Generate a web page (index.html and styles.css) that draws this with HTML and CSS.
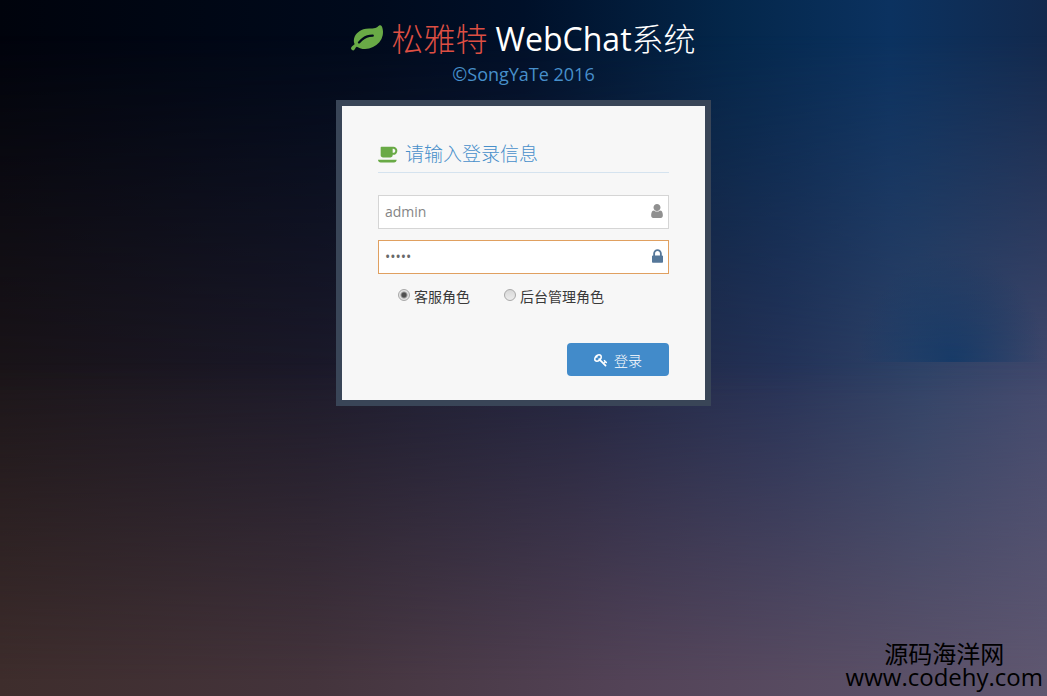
FILE: index.html
```html
<!DOCTYPE html>
<html lang="zh-CN">
    <head>
        <meta charset="utf-8">
        <meta name="viewport" content="width=device-width, initial-scale=1">
        <title>松雅特WebChat系统</title>
        <link rel="stylesheet" href="styles.css">
    </head>
    <body>
        <main class="login-container">
            <header class="brand">
                <h1>
                    <svg class="icon-leaf" viewBox="0 0 1792 1792" aria-hidden="true"><path d="M1280 704q0-26-19-45t-45-19q-172 0-318 49.5t-259.5 134-235.5 219.5q-19 21-19 45 0 26 19 45t45 19q24 0 45-19 27-24 74-71t67-66q137-124 268.5-176t313.5-52q26 0 45-19t19-45zm512-198q0 95-20 193-46 224-184.5 383t-357.5 268q-214 108-438 108-148 0-286-47-15-5-88-42t-96-37q-16 0-39.5 32t-45 70-52.5 70-60 32q-43 0-63.5-17.5t-45.5-59.5q-2-4-6-11t-5.5-10-3-9.5-1.5-13.5q0-35 31-73.5t68-65.5 68-56 31-48q0-4-14-38t-16-44q-9-51-9-104 0-115 43.5-220t119-184.5 170.5-139 204-95.5q55-18 145-25.5t179.5-9 178.5-6 163.5-24 113.5-56.5l29.5-29.5 29.5-28 27-20 36.5-16 43.5-4.5q39 0 70.5 46t47.5 112 24 124 8 96z"/></svg>
                    <span class="red">松雅特</span>
                    <span>WebChat<span class="light">系统</span></span>
                </h1>
                <h4>©SongYaTe 2016</h4>
            </header>

            <form class="login-box">
                <h2>
                    <svg class="icon-coffee" viewBox="0 0 1920 1792" aria-hidden="true"><path d="M1664 544q0-80-56-136t-136-56h-64v384h64q80 0 136-56t56-136zm-1664 864h1792q0 106-75 181t-181 75h-1280q-106 0-181-75t-75-181zm1856-864q0 159-112.5 271.5t-271.5 112.5h-64v32q0 92-66 158t-158 66h-704q-92 0-158-66t-66-158v-736q0-26 19-45t45-19h1152q159 0 271.5 112.5t112.5 271.5z"/></svg>
                    请输入登录信息
                </h2>

                <div class="field">
                    <input type="text" name="username" value="admin" aria-label="用户名">
                    <svg class="icon-user" viewBox="256 128 1280 1536" aria-hidden="true"><path d="M1536 1399q0 109-62.5 187t-150.5 78h-854q-88 0-150.5-78t-62.5-187q0-85 8.5-160.5t31.5-152 58.5-131 94-89 134.5-34.5q131 128 313 128t313-128q76 0 134.5 34.5t94 89 58.5 131 31.5 152 8.5 160.5zm-256-887q0 159-112.5 271.5t-271.5 112.5-271.5-112.5-112.5-271.5 112.5-271.5 271.5-112.5 271.5 112.5 112.5 271.5z"/></svg>
                </div>
                <div class="field active">
                    <input type="password" name="password" value="admin" aria-label="密码">
                    <svg class="icon-lock" viewBox="320 128 1152 1408" aria-hidden="true"><path d="M640 768h512v-192q0-106-75-181t-181-75-181 75-75 181v192zm832 96v576q0 40-28 68t-68 28h-960q-40 0-68-28t-28-68v-576q0-40 28-68t68-28h32v-192q0-184 132-316t316-132 316 132 132 316v192h32q40 0 68 28t28 68z"/></svg>
                </div>

                <div class="roles">
                    <label><input type="radio" name="role" value="service" checked>客服角色</label>
                    <label><input type="radio" name="role" value="manager">后台管理角色</label>
                </div>

                <div class="actions">
                    <button type="button">
                        <svg class="icon-key" viewBox="0 0 1792 1792" aria-hidden="true"><path d="M832 512q0-80-56-136t-136-56-136 56-56 136q0 42 19 83-41-19-83-19-80 0-136 56t-56 136 56 136 136 56 136-56 56-136q0-42-19-83 41 19 83 19 80 0 136-56t56-136zm851 704q0 17-49 66t-66 49q-9 0-28.5-16t-36.5-33-38.5-40-24.5-26l-96 96 220 220q28 28 28 68 0 42-39 81t-81 39q-40 0-68-28l-671-671q-176 131-365 131-163 0-265.5-102.5t-102.5-265.5q0-160 95-313t248-248 313-95q163 0 265.5 102.5t102.5 265.5q0 189-131 365l355 355 96-96q-3-3-26-24.5t-40-38.5-33-36.5-16-28.5q0-17 49-66t66-49q13 0 23 10 6 6 46 44.5t82 79.5 86.5 86 73 78 28.5 41z"/></svg>
                        登录
                    </button>
                </div>
            </form>
        </main>

        <footer class="watermark">
            <div>源码海洋网</div>
            <div>www.codehy.com</div>
        </footer>
    </body>
</html>
```

FILE: styles.css
```css
*{
    box-sizing: border-box;
}
/* night sky: top row of colours here, middle and bottom rows fade in over it */
body{
    margin:0;
    min-height:100vh;
    display:flex;
    flex-direction: column;
    justify-content: space-between;
    position:relative;
    z-index:0;
    font-family: "Open Sans", "Noto Sans CJK SC", sans-serif;
    font-size:14px;
    color:#393939;
    background: linear-gradient(to right, #00030c, #000a1c 35%, #001029 50%, #04274b 70%, #0b3260 85%, #12294d);
}
body::before,
body::after{
    content:"";
    position:absolute;
    inset:0;
    z-index:-1;
}
body::before{
    /* dark cloud bank on the right, flat along its lower edge */
    background:
        radial-gradient(ellipse at 50% 100%, rgba(18,58,105,.8), transparent 70%) no-repeat right 43% / 190px 110px,
        linear-gradient(to right, #1b1519, #1c1a2a 30%, #21243f 55%, #263358 75%, #314468 88%, #434a6e);
    -webkit-mask-image: linear-gradient(transparent 5%, #000 57%);
    mask-image: linear-gradient(transparent 5%, #000 57%);
}
body::after{
    background: linear-gradient(to right, #3e2d2c, #44343c 30%, #534357 60%, #5f5770);
    -webkit-mask-image: linear-gradient(transparent 52%, #000 98%);
    mask-image: linear-gradient(transparent 52%, #000 98%);
}
h1, h2, h4{
    margin:0;
    font-weight:400;
}
svg{
    fill:currentColor;
}
.login-container{
    width:375px;
    max-width:100%;
    margin:0 auto;
}

/* title */
.brand{
    padding-top:17px;
    text-align:center;
}
.brand h1{
    display:flex;
    justify-content:center;
    align-items:center;
    gap:8px;
    font-size:32px;
    line-height:44px;
    color:#fff;
    white-space:nowrap;
}
.brand h1 .red{
    font-weight:300;
    color:#dd4f43;
}
.brand h1 .light{
    font-weight:300;
}
.brand h4{
    margin-bottom:12px;
    font-size:18px;
    line-height:27px;
    color:#478fca;
}
.icon-leaf{
    width:32px;
    height:32px;
    color:#69aa46;
}

/* login form */
.login-box{
    padding:36px 36px 24px;
    border:6px solid #394557;
    background:#f7f7f7;
}
.login-box h2{
    display:flex;
    align-items:center;
    gap:7px;
    margin-bottom:22px;
    padding-bottom:6px;
    border-bottom:1px solid #d5e3ef;
    font-size:19px;
    font-weight:300;
    line-height:24px;
    color:#478fca;
}
.icon-coffee{
    width:20px;
    height:19px;
    color:#69aa46;
}
.field{
    position:relative;
    margin-bottom:11px;
    color:#909090;
}
.field input{
    display:block;
    width:100%;
    height:34px;
    padding:0 24px 2px 6px;
    border:1px solid #d5d5d5;
    border-radius:0;
    outline:none;
    background:#fff;
    font-family:inherit;
    font-size:14px;
    color:#858585;
}
.field.active{
    color:#557799;
}
.field.active input{
    border-color:#e0a060;
    color:#696969;
}
.field svg{
    position:absolute;
    top:9px;
    right:6px;
    height:14px;
}
.icon-user{
    width:12px;
}
.icon-lock{
    width:11px;
}
.roles{
    display:flex;
    gap:34px;
    padding-left:20px;
}
.roles label{
    display:flex;
    align-items:center;
    gap:4px;
    line-height:24px;
}
.roles input{
    appearance:none;
    width:12px;
    height:12px;
    margin:0 0 4px;
    border:1px solid #a8a8a8;
    border-radius:50%;
    background:linear-gradient(#d8d8d8, #ececec);
}
.roles input:checked{
    background:radial-gradient(circle, #505050 0 2px, #e4e4e4 4px);
}
.actions{
    display:flex;
    justify-content:flex-end;
    margin-top:34px;
}
button{
    display:flex;
    justify-content:center;
    align-items:center;
    gap:6px;
    width:102px;
    height:33px;
    padding:1px 0 0;
    border:0;
    border-radius:4px;
    background:#428bca;
    font-family:inherit;
    font-size:14px;
    font-weight:300;
    color:#fff;
    cursor:pointer;
}
button:hover{
    background:#1b6aaa;
}
.icon-key{
    width:14px;
    height:14px;
}

/* site mark in the corner */
.watermark{
    align-self:flex-end;
    padding:0 4px 8px 0;
    text-align:center;
    font-size:24px;
    line-height:23px;
    color:#000;
}
```
